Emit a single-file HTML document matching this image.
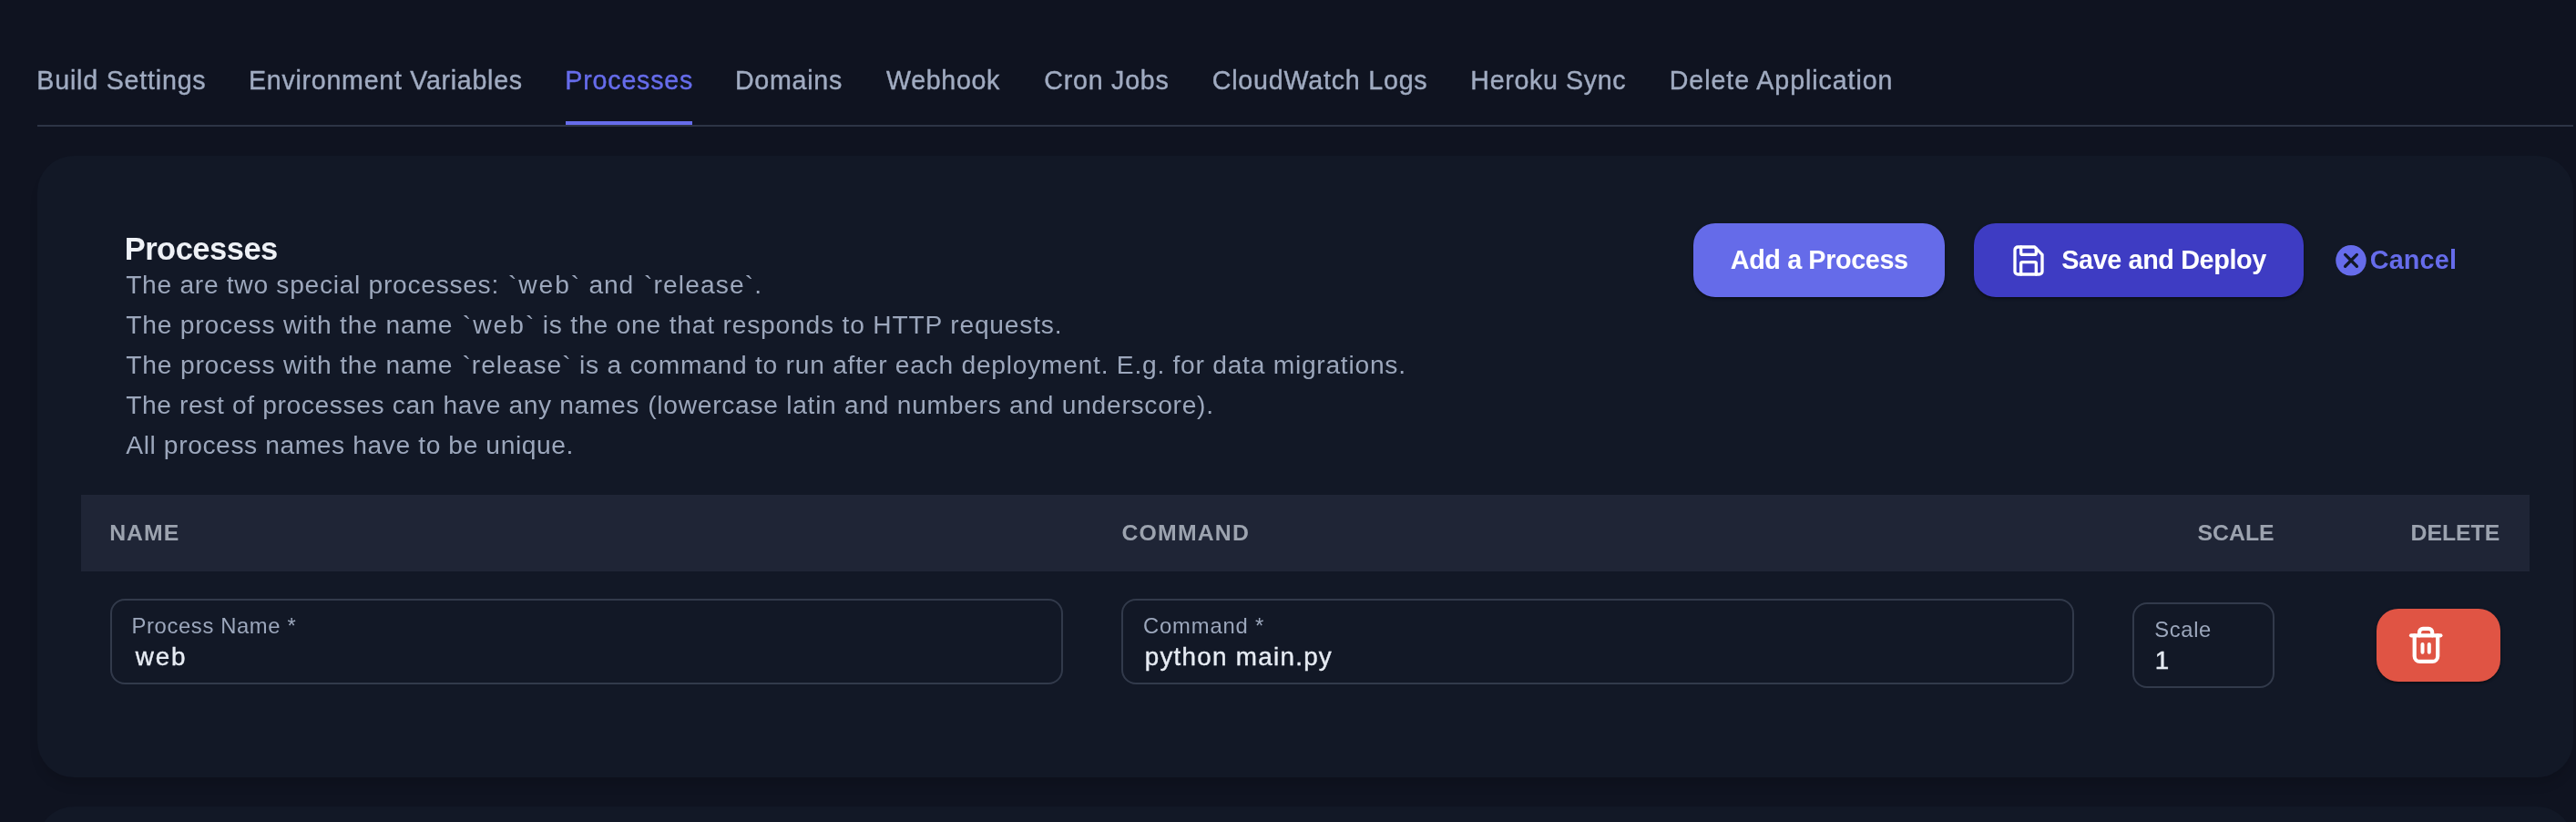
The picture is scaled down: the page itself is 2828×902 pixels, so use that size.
<!DOCTYPE html>
<html lang="en"><head><meta charset="utf-8"><title>Processes</title>
<style>
html,body{margin:0;padding:0;background:#0f1320;}
body{width:2828px;height:902px;position:relative;overflow:hidden;font-family:"Liberation Sans",sans-serif;}
.t{position:absolute;white-space:nowrap;line-height:1;margin:0;padding:0;display:block;font-weight:400;text-decoration:none;}
p,nav,section,h2{margin:0;padding:0;}
.m{-webkit-text-stroke:0.4px currentColor;}
.b{position:absolute;box-sizing:border-box;}
.card{background:#121826;border-radius:40px;box-shadow:0 11px 12px -3px rgba(0,0,0,.13);}
.inp{border:2px solid #323a4b;border-radius:16px;}
.btn{border-radius:24px;box-shadow:0 2px 2px rgba(0,0,0,.3),0 1px 4px rgba(0,0,0,.1);}
svg{position:absolute;overflow:visible;}
#root{position:absolute;left:0;top:0;width:2828px;height:902px;will-change:transform;}
</style></head><body><div id="root">
<!-- tab bar -->
<div class="b" style="left:41px;top:137px;width:2784px;height:2px;background:#2d3445"></div>
<div class="b" style="left:621px;top:133px;width:139px;height:4px;background:#666ceb"></div>
<!-- cards -->
<div class="b card" style="left:41px;top:171px;width:2784px;height:682px"></div>
<div class="b card" style="left:41px;top:885px;width:2784px;height:300px"></div>
<!-- buttons -->
<div class="b btn" style="left:1859px;top:245px;width:276px;height:81px;background:#656be9"></div>
<div class="b btn" style="left:2167px;top:245px;width:362px;height:81px;background:#3e3cc3"></div>
<svg style="left:2207px;top:266px" width="40" height="40" viewBox="0 0 24 24" fill="none" stroke="#fff" stroke-width="2" stroke-linecap="round" stroke-linejoin="round"><path d="M5 3h11l5 5v11a2 2 0 0 1-2 2H5a2 2 0 0 1-2-2V5a2 2 0 0 1 2-2z"/><path d="M17 21v-7a1 1 0 0 0-1-1H8a1 1 0 0 0-1 1v7"/><path d="M7 3v4a1 1 0 0 0 1 1h8a1 1 0 0 0 1-1V4"/></svg>
<svg style="left:2561px;top:266px" width="40" height="40" viewBox="0 0 24 24"><circle cx="12" cy="11.9" r="10.05" fill="#666ceb"/><path d="M8.15 8.05l7.7 7.7M15.85 8.05l-7.7 7.7" stroke="#121826" stroke-width="1.95" stroke-linecap="round" fill="none"/></svg>
<!-- table -->
<div class="b" style="left:89px;top:543px;width:2688px;height:84px;background:#1f2536"></div>
<div class="b inp" style="left:121px;top:657px;width:1046px;height:94px"></div>
<div class="b inp" style="left:1231px;top:657px;width:1046px;height:94px"></div>
<div class="b inp" style="left:2341px;top:661px;width:156px;height:94px"></div>
<div class="b btn" style="left:2609px;top:668px;width:136px;height:80px;background:#e05444"></div>
<svg style="left:2635px;top:680px" width="60" height="56" viewBox="2635 680 60 56" fill="none" stroke="#fff" stroke-width="4.2" stroke-linecap="round" stroke-linejoin="round"><path d="M2647 697.3H2679.4"/><path d="M2650.7 697.3V719.9a6 6 0 0 0 6 6H2670.2a6 6 0 0 0 6-6V697.3"/><path d="M2656 697.3V693.9a4 4 0 0 1 4-4h6.2a4 4 0 0 1 4 4V697.3"/><path d="M2659.5 707V715.8M2666.8 707V715.8" stroke-width="4"/></svg>
<nav>
<a class="t m" style="left:40.37px;top:73.78px;font-size:28.6px;letter-spacing:0.804px;color:#a0abc1;">Build Settings</a>
<a class="t m" style="left:273.07px;top:73.78px;font-size:28.6px;letter-spacing:0.726px;color:#a0abc1;">Environment Variables</a>
<a class="t m" style="left:620.37px;top:73.78px;font-size:28.6px;letter-spacing:0.814px;color:#666ceb;">Processes</a>
<a class="t m" style="left:806.97px;top:73.78px;font-size:28.6px;letter-spacing:0.746px;color:#a0abc1;">Domains</a>
<a class="t m" style="left:973.10px;top:73.78px;font-size:28.6px;letter-spacing:0.658px;color:#a0abc1;">Webhook</a>
<a class="t m" style="left:1146.26px;top:73.78px;font-size:28.6px;letter-spacing:0.786px;color:#a0abc1;">Cron Jobs</a>
<a class="t m" style="left:1330.76px;top:73.78px;font-size:28.6px;letter-spacing:0.804px;color:#a0abc1;">CloudWatch Logs</a>
<a class="t m" style="left:1614.37px;top:73.78px;font-size:28.6px;letter-spacing:0.656px;color:#a0abc1;">Heroku Sync</a>
<a class="t m" style="left:1832.77px;top:73.78px;font-size:28.6px;letter-spacing:0.930px;color:#a0abc1;">Delete Application</a>
</nav>
<section>
<h2 class="t" style="left:136.64px;top:256.49px;font-size:34.5px;letter-spacing:-0.498px;color:#eef1f6;font-weight:700;">Processes</h2>
<p><span class="t" style="left:138.16px;top:298.22px;font-size:28.2px;letter-spacing:0.709px;color:#9ca7bc;">The are two special processes:</span>
<span class="t" style="left:557.88px;top:298.22px;font-size:28.2px;letter-spacing:1.952px;color:#9ca7bc;">`web`</span>
<span class="t" style="left:646.52px;top:298.22px;font-size:28.2px;letter-spacing:0.857px;color:#9ca7bc;">and</span>
<span class="t" style="left:706.98px;top:298.22px;font-size:28.2px;letter-spacing:1.129px;color:#9ca7bc;">`release`.</span></p>
<p><span class="t" style="left:138.16px;top:342.12px;font-size:28.2px;letter-spacing:0.826px;color:#9ca7bc;">The process with the name</span>
<span class="t" style="left:507.78px;top:342.12px;font-size:28.2px;letter-spacing:2.027px;color:#9ca7bc;">`web`</span>
<span class="t" style="left:595.74px;top:342.12px;font-size:28.2px;letter-spacing:0.804px;color:#9ca7bc;">is the one that responds to HTTP requests.</span></p>
<p><span class="t" style="left:138.16px;top:386.12px;font-size:28.2px;letter-spacing:0.830px;color:#9ca7bc;">The process with the name</span>
<span class="t" style="left:507.48px;top:386.12px;font-size:28.2px;letter-spacing:0.981px;color:#9ca7bc;">`release`</span>
<span class="t" style="left:636.04px;top:386.12px;font-size:28.2px;letter-spacing:0.745px;color:#9ca7bc;">is a command to run after each deployment. E.g. for data migrations.</span></p>
<p><span class="t" style="left:138.16px;top:430.02px;font-size:28.2px;letter-spacing:0.621px;color:#9ca7bc;">The rest of processes can have any names</span>
<span class="t" style="left:711.18px;top:430.02px;font-size:28.2px;letter-spacing:0.720px;color:#9ca7bc;">(lowercase latin and numbers and underscore).</span></p>
<p><span class="t" style="left:138.30px;top:473.92px;font-size:28.2px;letter-spacing:0.602px;color:#9ca7bc;">All process names have to be unique.</span></p>
<div class="actions">
<span class="t" style="left:1899.75px;top:270.62px;font-size:28.8px;letter-spacing:-0.397px;color:#ffffff;font-weight:700;">Add a Process</span>
<span class="t" style="left:2263.25px;top:270.62px;font-size:28.8px;letter-spacing:-0.394px;color:#ffffff;font-weight:700;">Save and Deploy</span>
<span class="t" style="left:2601.70px;top:270.62px;font-size:28.8px;letter-spacing:0.152px;color:#666ceb;font-weight:700;">Cancel</span>
</div>
<div class="thead">
<span class="t" style="left:120.15px;top:573.30px;font-size:24.8px;letter-spacing:1.061px;color:#9ca3af;font-weight:700;">NAME</span>
<span class="t" style="left:1231.52px;top:573.30px;font-size:24.8px;letter-spacing:1.181px;color:#9ca3af;font-weight:700;">COMMAND</span>
<span class="t" style="left:2412.41px;top:573.30px;font-size:24.8px;letter-spacing:0.048px;color:#9ca3af;font-weight:700;">SCALE</span>
<span class="t" style="left:2646.55px;top:573.30px;font-size:24.8px;letter-spacing:-0.026px;color:#9ca3af;font-weight:700;">DELETE</span>
</div>
<div class="row">
<label class="t" style="left:144.54px;top:675.05px;font-size:23.8px;letter-spacing:0.635px;color:#9ca7bc;">Process Name *</label>
<label class="t" style="left:1254.98px;top:675.05px;font-size:23.8px;letter-spacing:0.837px;color:#9ca7bc;">Command *</label>
<label class="t" style="left:2365.36px;top:678.95px;font-size:23.8px;letter-spacing:0.593px;color:#9ca7bc;">Scale</label>
<div class="t m" style="left:148.83px;top:707.16px;font-size:27.8px;letter-spacing:1.797px;color:#e6ebf3;">web</div>
<div class="t m" style="left:1256.66px;top:707.16px;font-size:27.8px;letter-spacing:1.277px;color:#e6ebf3;">python main.py</div>
<div class="t m" style="left:2365.86px;top:711.06px;font-size:27.8px;letter-spacing:0.000px;color:#e6ebf3;">1</div>
</div>
</section>
</div></body></html>
